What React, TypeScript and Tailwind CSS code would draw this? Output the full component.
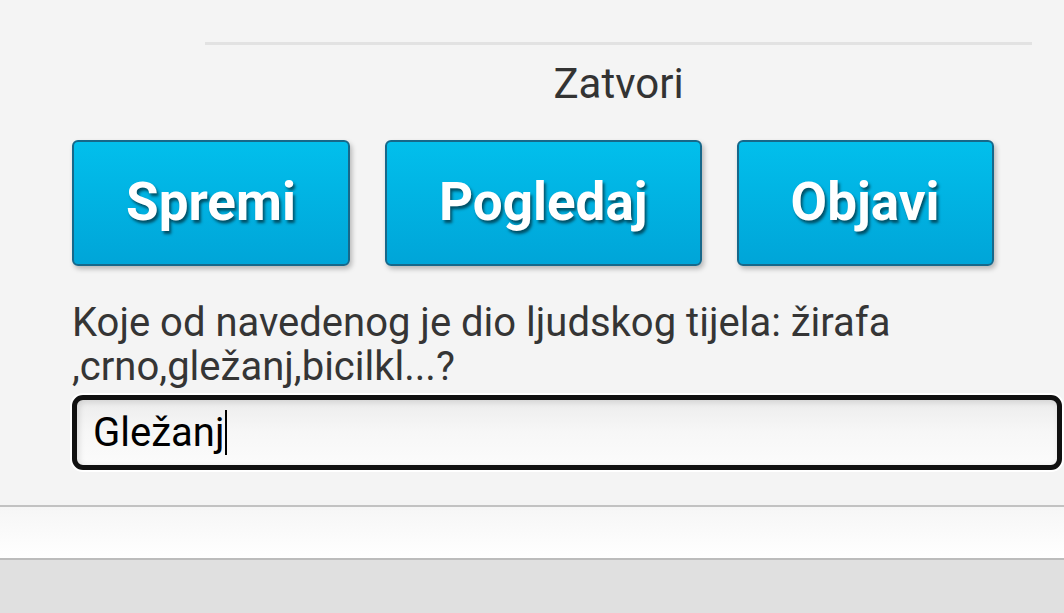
const buttons = ['Spremi', 'Pogledaj', 'Objavi'];

export default function App() {
    return (
        <div className="h-[613px] w-[1064px] overflow-hidden bg-[#e0e0e0] font-['Roboto',sans-serif]">
            {/* Dialog body */}
            <div className="h-[505px] bg-[#f4f4f4] pt-[42px]">
                <div className="ml-[205px] w-[827px]">
                    <div className="h-[3px] bg-[#e2e2e2]" />
                    <div className="mt-[14px] text-center text-[42px] leading-[50px] text-[#333333]">Zatvori</div>
                </div>

                <div className="mt-[31px] flex gap-[35px] pl-[72px]">
                    {buttons.map((label) => (
                        <button
                            key={label}
                            type="button"
                            className="h-[126px] rounded-[6px] border-2 border-[#17688a] bg-gradient-to-b from-[#02bfec] to-[#00a5d8] px-[52px] text-[53px] font-bold text-white shadow-[2px_3px_5px_rgba(0,0,0,0.25)] [text-shadow:2px_3px_3px_rgba(0,0,0,0.55)]"
                        >
                            {label}
                        </button>
                    ))}
                </div>

                <p className="mt-[35px] w-[960px] pl-[72px] text-[40px] leading-[44px] text-[#353535]">
                    Koje od navedenog je dio ljudskog tijela: žirafa ,crno,gležanj,bicilkl...?
                </p>

                <div className="ml-[70px] mt-[4px] w-[994px] rounded-[13px] bg-white p-[2px]">
                    <div className="flex h-[75px] items-center rounded-[11px] border-[5px] border-[#111111] bg-gradient-to-b from-[#ececec] via-[#f7f7f7] to-[#fbfbfb] pl-[16px] shadow-[inset_2px_2px_6px_rgba(0,0,0,0.12)]">
                        <span className="text-[40px] leading-none text-black">Gležanj</span>
                        <span className="ml-[1px] h-[45px] w-[2px] bg-black" />
                    </div>
                </div>
            </div>

            {/* Bottom bar */}
            <div className="h-[55px] border-y-2 border-t-[#c2c2c2] border-b-[#bcbcbc] bg-gradient-to-b from-[#f6f6f6] to-white" />
        </div>
    );
}
